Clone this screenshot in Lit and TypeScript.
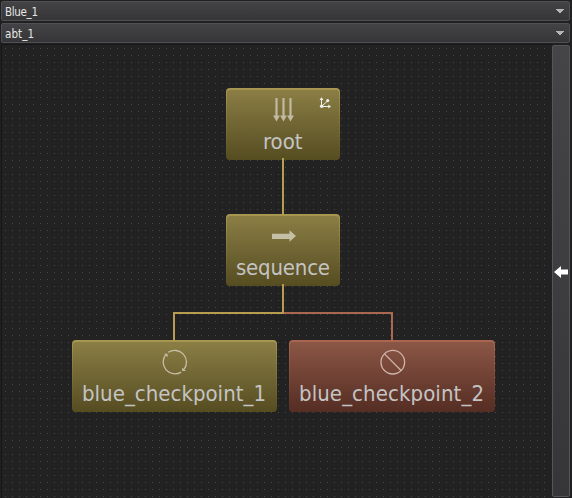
import { LitElement, html, svg, css } from "lit";
import { customElement, property } from "lit/decorators.js";

@customElement("select-bar")
class SelectBar extends LitElement {
  @property() label = "";
  @property({ type: Number }) span = 32;
  static styles = css`
    :host {
      display: flex; align-items: center; justify-content: space-between;
      box-sizing: border-box; height: 20px; padding: 0 5px 0 3px;
      border: 1px solid #505052; border-radius: 2px;
      background: linear-gradient(#434345, #363638);
    }
    svg { display: block; }
    text { font: 11.5px "DejaVu Sans Condensed", "DejaVu Sans", sans-serif; font-stretch: condensed; fill: #e6e6e6; }
  `;
  render() {
    return html`<svg width="60" height="18"><text x="0" y="14" textLength=${this.span}>${this.label}</text></svg>
      <svg width="8" height="4" shape-rendering="crispEdges"><path d="M0 0H8V1H7V2H6V3H5V4H3V3H2V2H1V1H0Z" fill="#b5b5b5"/></svg>`;
  }
}

interface TreeNode {
  x: number; y: number; w: number; label: string; tx: number; tw: number; kind: "gold" | "red"; icon: unknown;
}

const nodes: TreeNode[] = [
  {
    x: 226, y: 88, w: 114, label: "root", tx: 37, tw: 39.5, kind: "gold",
    icon: svg`<g fill="#c0baa0">
      ${[50.5, 57.5, 64.5].map((x) => svg`<path d="M${x - 1.1} 10h2.2v17.6h2.3l-3.4 6l-3.4 -6h2.3z"/>`)}
    </g>
    <g stroke="#eeeeea" fill="#eeeeea" stroke-width="1">
      <path d="M95.5 18.5V10.5M95.5 18.5H103.5M95.5 18.5L101.5 13" fill="none"/>
      <path stroke="none" d="M93.5 12L95.5 9.3L97.5 12ZM102.3 16.5L105 18.5L102.3 20.5Z"/>
      <circle cx="95.7" cy="18.3" r="1.8" stroke="none"/><circle cx="101.7" cy="12.6" r="1.6" stroke="none"/>
    </g>`,
  },
  {
    x: 226, y: 214, w: 114, label: "sequence", tx: 10, tw: 94, kind: "gold",
    icon: svg`<path d="M46 19.8H63.5V16.3L70 22L63.5 27.7V25H46Z" fill="#c5bfa6"/>`,
  },
  {
    x: 72, y: 340, w: 205, label: "blue_checkpoint_1", tx: 10, tw: 184, kind: "gold",
    icon: svg`<g fill="none" stroke="#c5bfa6" stroke-width="1.3">
      <path d="M96.3 12.3A11.8 11.8 0 0 1 112.2 29.2M109.1 32.1A11.8 11.8 0 0 1 93.7 14.7"/>
    </g><path d="M92.2 13.8H95.6V17.2ZM110.2 27.5V31H114Z" fill="#c5bfa6"/>`,
  },
  {
    x: 289, y: 340, w: 206, label: "blue_checkpoint_2", tx: 10, tw: 185, kind: "red",
    icon: svg`<g fill="none" stroke="#d0b4aa" stroke-width="1.3">
      <circle cx="103.8" cy="22.2" r="11.8"/><path d="M95.5 13.9L112.1 30.5"/></g>`,
  },
];

@customElement("app-root")
class AppRoot extends LitElement {
  static styles = css`
    :host {
      display: flex; flex-direction: column; box-sizing: border-box; height: 498px; width: 572px;
      padding: 1px 2px 1px 1px; gap: 2px; background: #202022; overflow: hidden;
    }
    .body { display: flex; height: 453px; margin-top: -1px; }
    .canvas { display: block; flex: none; width: 551px; height: 454px; }
    .side {
      box-sizing: border-box; flex: none; width: 18px; height: 452px; margin-top: 1px;
      border: 1px solid #555557; border-radius: 2px;
      background: linear-gradient(#454547, #363638);
      display: flex; align-items: center;
    }
    .side svg { display: block; margin: 1px 0 0 1px; flex: none; }
    .name { font: 22px "DejaVu Sans Condensed", "DejaVu Sans", sans-serif; font-stretch: condensed; fill: #c4c4c4; }
  `;
  render() {
    return html`
      <select-bar label="Blue_1" span="33"></select-bar>
      <select-bar label="abt_1" span="29"></select-bar>
      <div class="body">
        <svg class="canvas" viewBox="1 44 551 454">
          <defs>
            <pattern id="dots" x="5" y="48" width="7" height="7" patternUnits="userSpaceOnUse">
              <rect width="1" height="1" fill="#484848"/>
            </pattern>
            <linearGradient id="gold" x2="0" y2="1"><stop stop-color="#8b7e45"/><stop offset="1" stop-color="#554c21"/></linearGradient>
            <linearGradient id="red" x2="0" y2="1"><stop stop-color="#8b5646"/><stop offset="1" stop-color="#552d23"/></linearGradient>
            <linearGradient id="gold-edge" x2="0" y2="1"><stop stop-color="#a89750"/><stop offset="1" stop-color="#554c21"/></linearGradient>
            <linearGradient id="red-edge" x2="0" y2="1"><stop stop-color="#aa6650"/><stop offset="1" stop-color="#552d23"/></linearGradient>
          </defs>
          <rect x="1" y="44" width="551" height="454" fill="#222222"/>
          <rect x="3" y="46" width="546" height="452" fill="url(#dots)"/>
          <path d="M1.5 498V44.5H552" fill="none" stroke="#161616"/>
          ${nodes.map((n) => svg`<g transform="translate(${n.x} ${n.y})">
            <rect width=${n.w} height="72" rx="4" fill="url(#${n.kind}-edge)"/>
            <rect x="1" y="2" width=${n.w - 2} height="70" rx="3" fill="url(#${n.kind})"/>
            ${n.icon}
            <text class="name" x=${n.tx} y="61" textLength=${n.tw}>${n.label}</text>
          </g>`)}
          <g fill="none" stroke-width="2">
            <path d="M283 313H392V341" stroke="#ab6850"/>
            <path d="M283 158V215M283 284V313H174V341" stroke="#b89c50"/>
          </g>
        </svg>
        <div class="side"><svg width="14" height="12"><path d="M0 6L7 0V3.5H14V8.5H7V12Z" fill="#fff"/></svg></div>
      </div>`;
  }
}
